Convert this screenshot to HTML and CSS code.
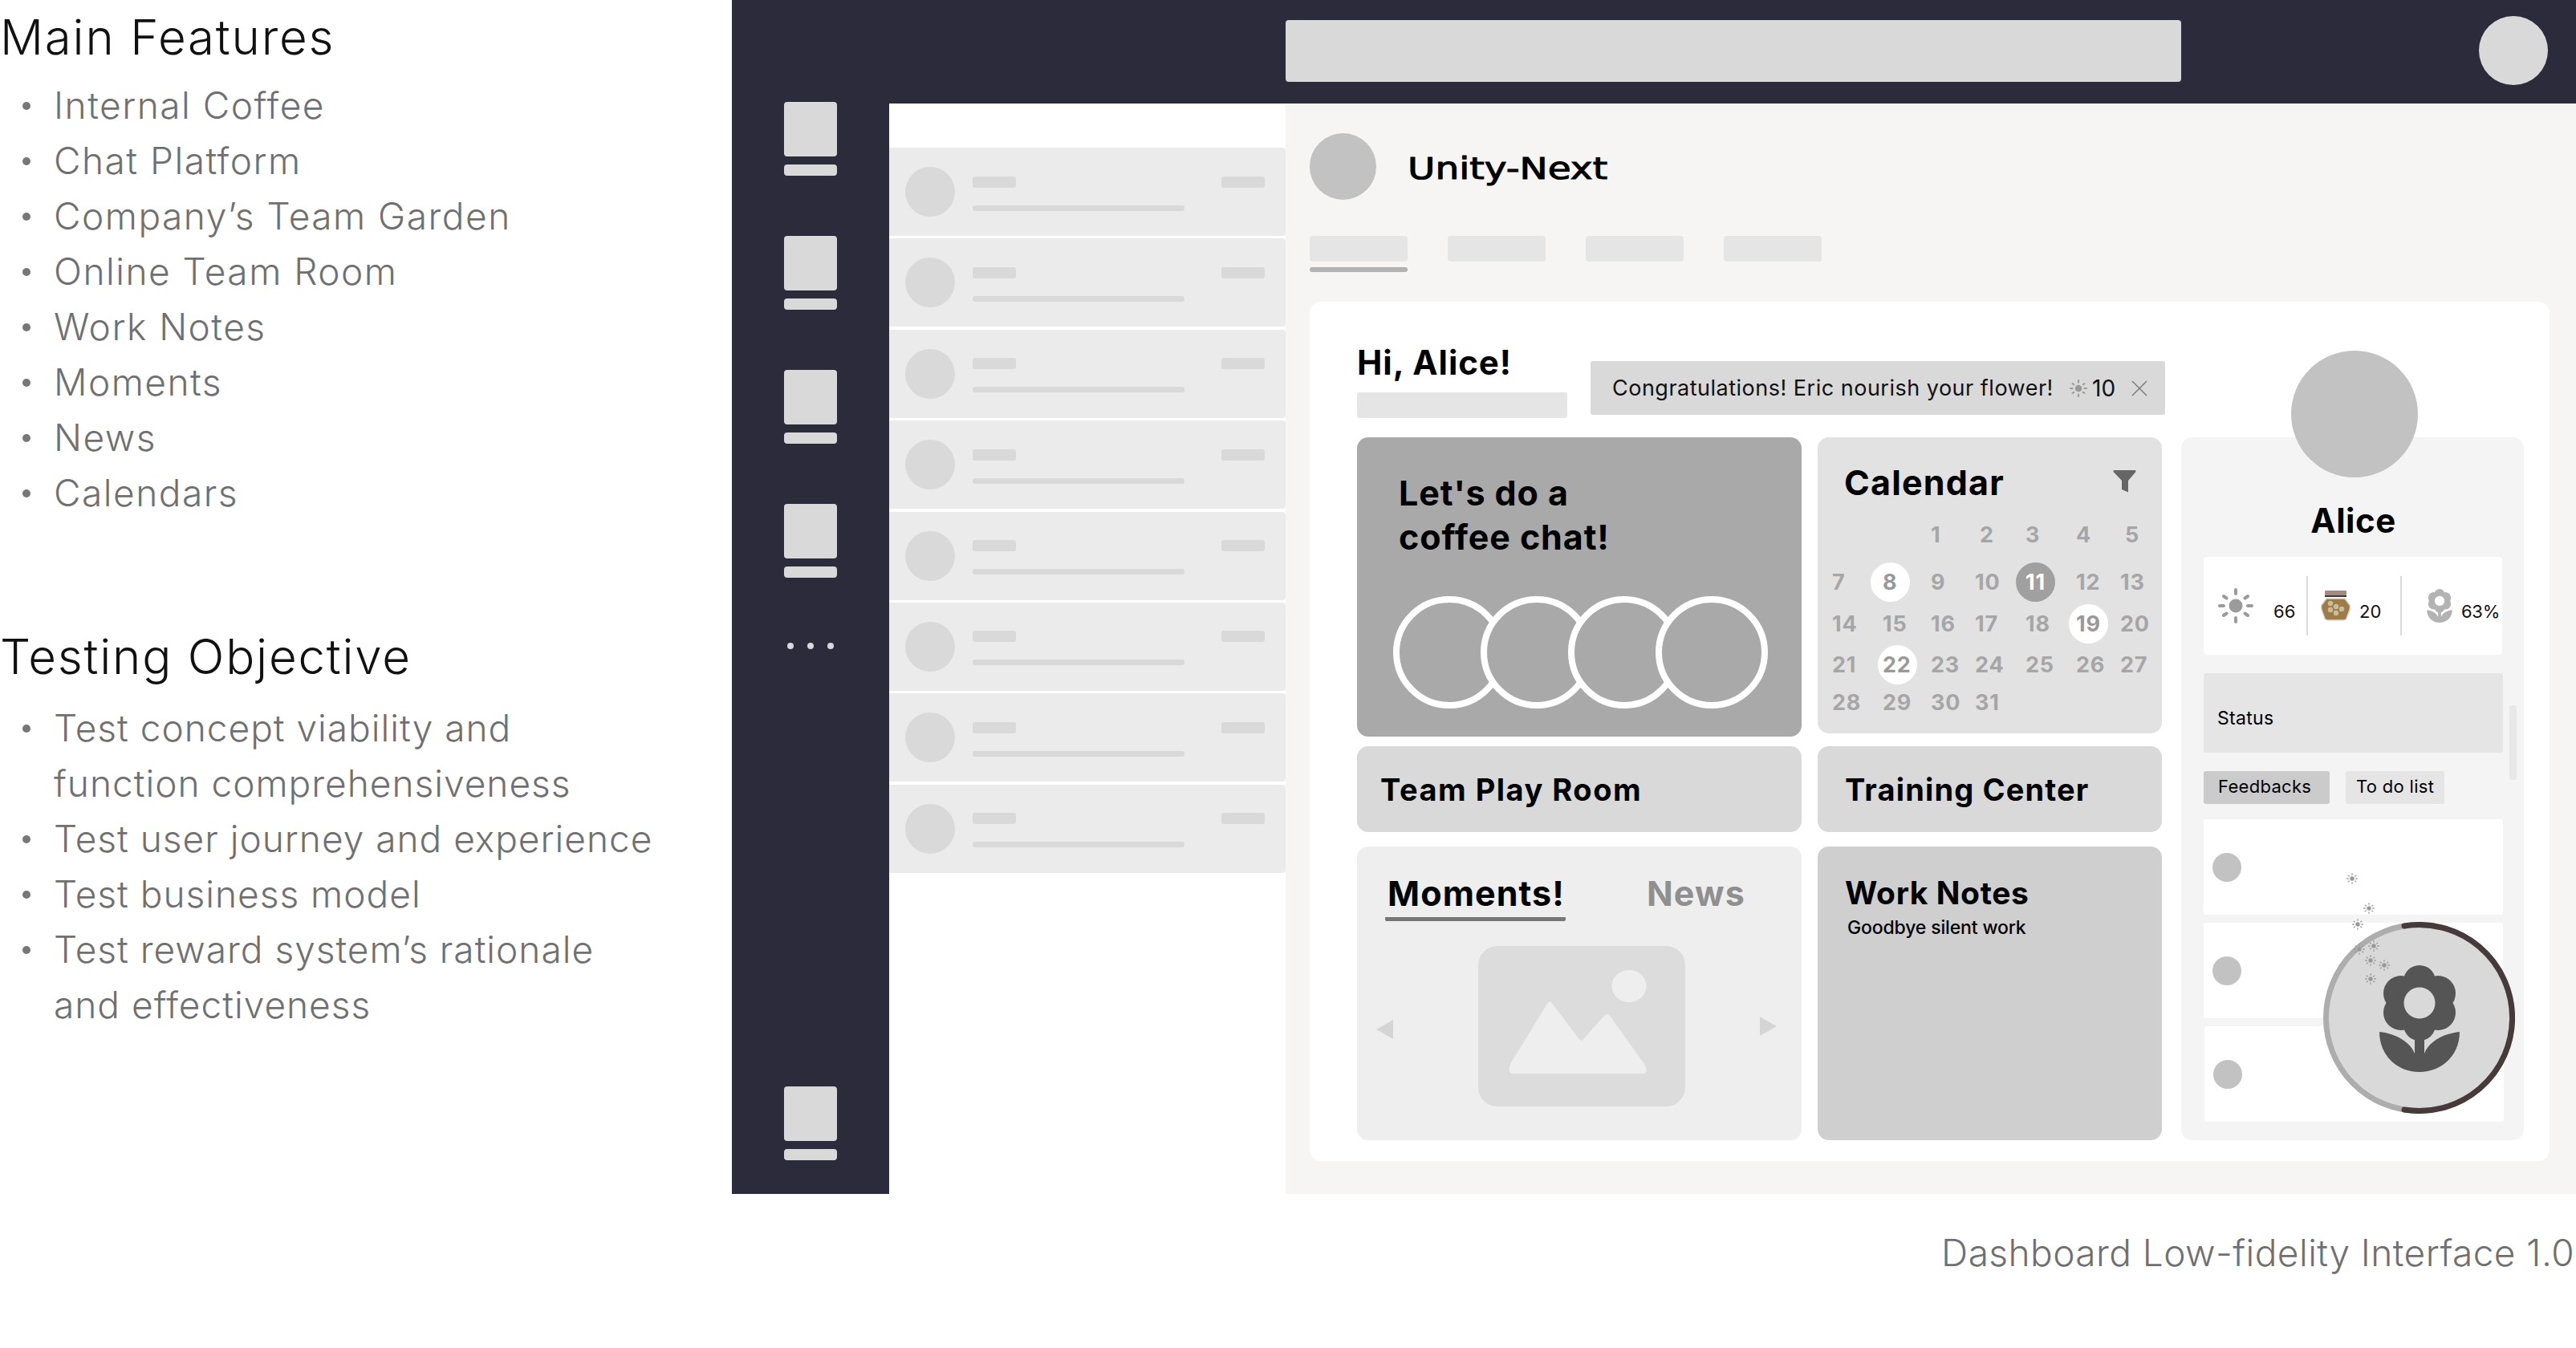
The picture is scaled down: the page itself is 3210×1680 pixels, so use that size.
FILE: index.html
```html
<!DOCTYPE html>
<html lang="en">
<head>
<meta charset="utf-8">
<title>Dashboard Low-fidelity Interface</title>
<link rel="stylesheet" href="styles.css">
</head>
<body>
<svg class="defs" width="0" height="0" aria-hidden="true">
  <symbol id="sun" viewBox="-22 -22 44 44">
    <circle r="8.5" fill="currentColor"/>
    <path d="M0-20V-15M0 20V15M20 0H15M-20 0H-15M15-12L11.5-9.5M-15-12L-11.5-9.5M15 12L11.5 9.5M-15 12L-11.5 9.5" stroke="currentColor" stroke-width="4" stroke-linecap="round" fill="none"/>
  </symbol>
  <symbol id="flower" viewBox="2965 1203 100 133">
    <g fill="currentColor">
      <circle cx="3015" cy="1223" r="20"/><circle cx="3015" cy="1277" r="20"/>
      <circle cx="2992" cy="1238" r="22"/><circle cx="3038" cy="1238" r="22"/>
      <circle cx="2992" cy="1262" r="22"/><circle cx="3038" cy="1262" r="22"/>
      <circle cx="3015" cy="1250" r="26"/>
      <path d="M2965 1286C2985 1288 3003 1298 3009 1313V1285H3021V1313C3027 1298 3045 1288 3065 1286C3065 1314 3044 1336 3015 1336C2986 1336 2965 1314 2965 1286Z"/>
    </g>
    <circle class="flower-hole" cx="3015" cy="1250" r="19.5"/>
  </symbol>
</svg>

<div class="page">
  <aside class="notes">
    <h2 class="notes-title">Main Features</h2>
    <ul class="notes-list">
      <li>Internal Coffee</li>
      <li>Chat Platform</li>
      <li>Company’s Team Garden</li>
      <li>Online Team Room</li>
      <li>Work Notes</li>
      <li>Moments</li>
      <li>News</li>
      <li>Calendars</li>
    </ul>
    <h2 class="notes-title notes-title-second">Testing Objective</h2>
    <ul class="notes-list notes-list-second">
      <li>Test concept viability and<br>function comprehensiveness</li>
      <li>Test user journey and experience</li>
      <li>Test business model</li>
      <li>Test reward system’s rationale<br>and effectiveness</li>
    </ul>
  </aside>

  <div class="right">
    <div class="screen">
      <header class="topbar">
        <div class="search"></div>
        <div class="top-avatar"></div>
      </header>

      <nav class="sidebar">
        <div class="nav-item"><i class="nav-box"></i><i class="nav-bar"></i></div>
        <div class="nav-item"><i class="nav-box"></i><i class="nav-bar"></i></div>
        <div class="nav-item"><i class="nav-box"></i><i class="nav-bar"></i></div>
        <div class="nav-item"><i class="nav-box"></i><i class="nav-bar"></i></div>
        <div class="nav-dots"><i></i><i></i><i></i></div>
        <div class="nav-item nav-bottom"><i class="nav-box"></i><i class="nav-bar"></i></div>
      </nav>

      <section class="chats">
        <div class="chat"><i class="chat-av"></i><div class="chat-body"><div class="chat-top"><i></i><i></i></div><i class="chat-line"></i></div></div>
        <div class="chat"><i class="chat-av"></i><div class="chat-body"><div class="chat-top"><i></i><i></i></div><i class="chat-line"></i></div></div>
        <div class="chat"><i class="chat-av"></i><div class="chat-body"><div class="chat-top"><i></i><i></i></div><i class="chat-line"></i></div></div>
        <div class="chat"><i class="chat-av"></i><div class="chat-body"><div class="chat-top"><i></i><i></i></div><i class="chat-line"></i></div></div>
        <div class="chat"><i class="chat-av"></i><div class="chat-body"><div class="chat-top"><i></i><i></i></div><i class="chat-line"></i></div></div>
        <div class="chat"><i class="chat-av"></i><div class="chat-body"><div class="chat-top"><i></i><i></i></div><i class="chat-line"></i></div></div>
        <div class="chat"><i class="chat-av"></i><div class="chat-body"><div class="chat-top"><i></i><i></i></div><i class="chat-line"></i></div></div>
        <div class="chat"><i class="chat-av"></i><div class="chat-body"><div class="chat-top"><i></i><i></i></div><i class="chat-line"></i></div></div>
      </section>

      <main class="main">
        <div class="brand-row">
          <div class="brand-logo"></div>
          <div class="brand-name">Unity-Next</div>
        </div>
        <div class="tabs">
          <div class="tab tab-active"><i></i></div>
          <div class="tab"><i></i></div>
          <div class="tab"><i></i></div>
          <div class="tab"><i></i></div>
        </div>

        <div class="board">
          <div class="board-left">
            <div class="greet">
              <div class="greet-col">
                <h1 class="greet-title">Hi, Alice!</h1>
                <div class="greet-bar"></div>
              </div>
              <div class="notice">
                <span class="notice-text">Congratulations! Eric nourish your flower!</span>
                <svg class="notice-sun"><use href="#sun"/></svg>
                <span class="notice-num">10</span>
                <svg class="notice-x" viewBox="0 0 20 20"><path d="M1 1L19 19M19 1L1 19"/></svg>
              </div>
            </div>

            <div class="cards">
              <div class="card coffee">
                <h3 class="coffee-title">Let's do a<br>coffee chat!</h3>
                <div class="rings"><i></i><i></i><i></i><i></i></div>
              </div>

              <div class="card calendar">
                <div class="cal-head">
                  <h3 class="cal-title">Calendar</h3>
                  <svg class="cal-filter" viewBox="0 0 29 28"><path d="M2 0H27Q29.500 0 28 2.500L19 13V27.500L11 24V13L1 2.500Q-.5 0 2 0Z"/></svg>
                </div>
                <div class="cal-grid">
                  <span></span><span></span><span>1</span><span class="cal-nudge">2</span><span>3</span><span>4</span><span class="cal-nudge">5</span>
                  <span>7</span><span class="day day-on">8</span><span>9</span><span>10</span><span class="day day-today">11</span><span>12</span><span>13</span>
                  <span>14</span><span>15</span><span>16</span><span>17</span><span>18</span><span class="day day-on">19</span><span>20</span>
                  <span>21</span><span class="day day-on">22</span><span>23</span><span>24</span><span>25</span><span>26</span><span>27</span>
                  <span>28</span><span>29</span><span>30</span><span>31</span>
                </div>
              </div>

              <div class="card strip strip-play"><h3>Team Play Room</h3></div>
              <div class="card strip strip-train"><h3>Training Center</h3></div>

              <div class="card moments">
                <div class="mom-tabs">
                  <h3 class="mom-tab mom-tab-on">Moments!</h3>
                  <h3 class="mom-tab mom-tab-off">News</h3>
                </div>
                <div class="carousel">
                  <i class="arrow arrow-left"></i>
                  <svg class="picture" viewBox="1841 1179 258 200">
                    <rect x="1841" y="1179" width="258" height="200" rx="24" fill="#dcdcdc"/>
                    <ellipse cx="2029" cy="1229" rx="21.500" ry="20" fill="#eeeeee"/>
                    <path d="M1932 1249L1966 1294Q1970 1300 1973 1294L1998 1266Q2002 1262 2005 1266L2048 1326Q2054 1338 2046 1338H1885Q1877 1338 1881 1326L1927 1251Q1930 1246 1932 1249Z" fill="#eeeeee"/>
                  </svg>
                  <i class="arrow arrow-right"></i>
                </div>
              </div>

              <div class="card notes-card">
                <h3 class="notes-card-title">Work Notes</h3>
                <p class="notes-card-sub">Goodbye silent work</p>
              </div>
            </div>
          </div>

          <aside class="profile">
            <div class="profile-avatar"></div>
            <h3 class="profile-name">Alice</h3>
            <div class="stats">
              <div class="stat stat-sun">
                <svg class="stat-sun-icon"><use href="#sun"/></svg>
                <span>66</span>
              </div>
              <div class="stat stat-jar">
                <svg class="stat-jar-icon" viewBox="0 0 37 38">
                  <rect x="5" y="0" width="27" height="6" rx="1" fill="#a58a80"/>
                  <rect x="5" y="6" width="27" height="2" fill="#3a3a3a"/>
                  <path d="M7 10H30L36 18Q37 20 36 24L32 35Q31 37 28 37H9Q6 37 5 35L1 24Q0 20 1 18Z" fill="#a07c44" stroke="#d9d9d9" stroke-width="1.500"/>
                  <g fill="#c5bda0"><circle cx="12" cy="16" r="3.200"/><circle cx="19" cy="20" r="3.200"/><circle cx="26" cy="23" r="3.200"/><circle cx="12" cy="24" r="3.200"/><circle cx="19" cy="28" r="3.200"/></g>
                </svg>
                <span>20</span>
              </div>
              <div class="stat stat-flower">
                <svg class="stat-flower-icon"><use href="#flower"/></svg>
                <span>63%</span>
              </div>
            </div>
            <div class="status-row">
              <div class="status">Status</div>
              <i class="scrollbar"></i>
            </div>
            <div class="pills">
              <span class="pill pill-on">Feedbacks</span>
              <span class="pill pill-todo">To do list</span>
            </div>
            <div class="feedback"><i></i></div>
            <div class="feedback"><i></i></div>
            <div class="feedback feedback-last"><i></i></div>

            <svg class="garden" viewBox="2895 1149 239 239">
              <circle cx="3014.500" cy="1268.500" r="116" fill="#d9d9d9" stroke="#adadad" stroke-width="7"/>
              <path d="M2996 1154A116 116 0 1 1 2996 1383" fill="none" stroke="#463a3a" stroke-width="7" stroke-linecap="round"/>
              <use href="#flower" class="garden-flower" x="2965" y="1203" width="100" height="133"/>
            </svg>
            <svg class="sparks" viewBox="2920 1085 64 150">
              <use href="#sun" x="2924" y="1088" width="14" height="14"/>
              <use href="#sun" x="2945" y="1125" width="14" height="14"/>
              <use href="#sun" x="2931" y="1145" width="14" height="14"/>
              <use href="#sun" x="2933" y="1176" width="14" height="14"/>
              <use href="#sun" x="2951" y="1172" width="14" height="14"/>
              <use href="#sun" x="2947" y="1190" width="14" height="14"/>
              <use href="#sun" x="2964" y="1196" width="14" height="14"/>
              <use href="#sun" x="2947" y="1213" width="14" height="14"/>
            </svg>
          </aside>
        </div>
      </main>
    </div>
    <p class="caption">Dashboard Low-fidelity Interface 1.0</p>
  </div>
</div>
</body>
</html>
```
FILE: styles.css
```css
* { box-sizing: border-box; }
html, body { margin: 0; padding: 0; background: #fff; }
body { font-family: "Inter", "Liberation Sans", sans-serif; color: #000; overflow: hidden; }
h1, h2, h3, p, ul { margin: 0; padding: 0; font-weight: inherit; font-size: inherit; }
i { display: block; }
.defs { position: absolute; }
.flower-hole { fill: var(--hole, #d9d9d9); }

.page { display: flex; width: 3210px; height: 1680px; }

/* Left notes */
.notes { width: 912px; flex: none; font-weight: 300; }
.notes-title { font-size: 60px; line-height: 70px; color: #111; letter-spacing: 1.8px; margin-top: 11px; white-space: nowrap; }
.notes-title-second { margin-top: 134px; }
.notes-list { list-style: none; margin-top: 16px; font-size: 46px; line-height: 69px; color: #707070; letter-spacing: 1.5px; white-space: nowrap; }
.notes-list-second { margin-top: 20px; letter-spacing: 1px; }
.notes-list li { position: relative; padding-left: 67px; }
.notes-list li::before { content: ""; position: absolute; left: 28px; top: 30px; width: 10px; height: 10px; border-radius: 50%; background: #777; }

.right { flex: 1; min-width: 0; }
.screen { width: 2298px; height: 1488px; display: grid; grid-template-rows: 129px 1fr; grid-template-columns: 196px 494px 1fr; }
.caption { margin-top: 50px; text-align: right; padding-right: 2px; font-size: 46px; line-height: 46px; font-weight: 300; letter-spacing: .44px; color: #707070; white-space: nowrap; }

/* Top bar */
.topbar { grid-column: 1 / -1; background: #2c2b3b; display: flex; align-items: flex-start; padding: 25px 35px 0 690px; }
.search { width: 1116px; height: 77px; background: #d9d9d9; border-radius: 4px; }
.top-avatar { width: 86px; height: 86px; margin: -5px 0 0 auto; border-radius: 50%; background: #d9d9d9; }

/* Sidebar */
.sidebar { background: #2c2b3b; display: flex; flex-direction: column; align-items: center; padding-bottom: 42px; }
.nav-item { width: 66px; margin-bottom: 75px; }
.nav-item:first-child { margin-top: -2px; }
.nav-box { height: 68px; background: #d9d9d9; border-radius: 4px; }
.nav-bar { height: 14px; margin-top: 10px; background: #d9d9d9; border-radius: 4px; }
.nav-dots { display: flex; gap: 17px; margin-top: 6px; }
.nav-dots i { width: 8px; height: 8px; border-radius: 50%; background: #d9d9d9; }
.nav-bottom { margin: auto 0 0; }

/* Chat list */
.chats { background: #fff; padding-top: 55px; display: flex; flex-direction: column; gap: 3.400px; }
.chat { height: 110px; background: #ebebeb; border-radius: 0 4px 4px 0; display: flex; align-items: center; padding-left: 20px; }
.chat-av { width: 62px; height: 62px; border-radius: 50%; background: #d9d9d9; }
.chat-body { margin: 4px 0 0 22px; width: 364px; }
.chat-top { display: flex; justify-content: space-between; }
.chat-top i { width: 54px; height: 14px; background: #d9d9d9; border-radius: 3px; }
.chat-line { width: 264px; height: 7px; margin-top: 22px; background: #d9d9d9; border-radius: 3px; }

/* Main */
.main { background: #f6f5f3; padding: 37px 33px 0 30px; }
.brand-row { display: flex; align-items: center; height: 83px; }
.brand-logo { width: 83px; height: 83px; border-radius: 50%; background: #c2c2c2; }
.brand-name { margin: 5px 0 0 39px; font-family: "DejaVu Sans", sans-serif; font-size: 37px; font-weight: 400; -webkit-text-stroke: 1px #000; transform: scaleX(1.27); transform-origin: left center; }
.tabs { display: flex; gap: 50px; margin-top: 45px; height: 45px; }
.tab { width: 122px; }
.tab i { height: 32px; background: #e5e5e5; border-radius: 4px; }
.tab-active::after { content: ""; display: block; height: 6px; margin-top: 7px; background: #b2b2b2; border-radius: 3px; }

.board { display: flex; gap: 24px; margin-top: 37px; height: 1071px; background: #fff; border-radius: 14px; padding-left: 59px; }
.board-left { width: 1003px; flex: none; }

.greet { height: 169px; display: flex; gap: 29px; }
.greet-col { width: 262px; flex: none; padding-top: 52px; }
.greet-title { font-size: 42px; line-height: 48px; font-weight: 700; letter-spacing: .95px; white-space: nowrap; }
.greet-bar { height: 32px; margin-top: 13px; background: #e5e5e5; border-radius: 3px; }
.notice { width: 716px; flex: none; height: 67px; margin-top: 74px; background: #d9d9d9; border-radius: 3px; display: flex; align-items: center; padding-left: 27px; font-size: 27px; color: #111; }
.notice-text { width: 548px; flex: none; white-space: nowrap; letter-spacing: .5px; }
.notice-sun { width: 22px; height: 22px; margin-left: 22px; flex: none; color: #999; }
.notice-num { margin-left: 6px; font-size: 28px; letter-spacing: 0; }
.notice-x { width: 20px; height: 20px; margin-left: 20px; flex: none; }
.notice-x path { stroke: #777; stroke-width: 1.400; fill: none; }

.cards { display: grid; grid-template-columns: 554px 429px; grid-template-rows: 373px 107px 366px; column-gap: 20px; row-gap: 12px; }
.card { border-radius: 14px; }

.coffee { background: #a9a9a9; padding: 42px 0 0 52px; }
.coffee-title { font-size: 43px; line-height: 55px; font-weight: 700; letter-spacing: .9px; }
.rings { display: flex; flex-direction: row-reverse; width: 467px; margin: 46px 0 0 -7px; }
.rings i { width: 140px; height: 140px; border-radius: 50%; border: 8px solid #fff; background: #a9a9a9; flex: none; }
.rings i + i { margin-right: -31px; }

.calendar { background: #e2e2e2; height: 369px; }
.cal-head { display: flex; justify-content: space-between; align-items: flex-start; padding: 28px 32px 0 33px; height: 85px; }
.cal-title { font-size: 43px; line-height: 56px; font-weight: 700; letter-spacing: 1.2px; }
.cal-filter { width: 29px; height: 28px; margin-top: 13px; fill: #666; }
.cal-grid { display: grid; grid-template-columns: 63px 60px 55px 63px 63px 55px 50px; grid-template-rows: 52px 59px 52px 51px 47px; padding-left: 18px; font-size: 27px; font-weight: 700; color: #a6a6a6; letter-spacing: .8px; }
.cal-grid span { align-self: end; justify-self: start; line-height: 30px; }
.cal-grid .cal-nudge { margin-left: 6px; }
.day { position: relative; z-index: 0; }
.day::before { content: ""; position: absolute; z-index: -1; left: 50%; top: 50%; width: 49px; height: 49px; margin: -25px 0 0 -24px; border-radius: 50%; background: #fff; }
.day-on { color: #999; }
.cal-grid .day-today { color: #fff; }
.day-today::before { background: #a0a0a0; }

.strip { background: #d9d9d9; display: flex; align-items: center; font-size: 38px; font-weight: 700; letter-spacing: 1.2px; }
.strip-play { padding-left: 29px; letter-spacing: 1.5px; }
.strip-train { padding-left: 34px; letter-spacing: 1.15px; }

.moments { background: #eeeeee; margin-top: 6px; height: 366px; }
.mom-tabs { display: flex; padding: 30px 0 0 35px; height: 124px; }
.mom-tab { font-size: 43px; line-height: 56px; font-weight: 700; letter-spacing: 1.1px; height: 64px; }
.mom-tab-on { width: 225px; flex: none; padding-left: 3px; border-bottom: 5px solid #777; border-radius: 0 0 2px 2px; height: 63px; white-space: nowrap; }
.mom-tab-off { margin-left: 101px; color: #8f8f8f; }
.carousel { display: flex; align-items: center; padding-left: 24px; height: 200px; }
.picture { width: 258px; height: 200px; margin-left: 106px; flex: none; }
.arrow { width: 21px; height: 24px; background: #d5d5d5; flex: none; }
.arrow-left { clip-path: polygon(100% 0, 100% 100%, 0 50%); margin-top: 8px; }
.arrow-right { clip-path: polygon(0 0, 100% 50%, 0 100%); margin-left: 93px; }

.notes-card { background: #cfcfcf; margin-top: 6px; height: 366px; padding: 30px 0 0 34px; }
.notes-card-title { font-size: 39px; line-height: 56px; font-weight: 700; letter-spacing: .6px; }
.notes-card-sub { font-size: 23px; line-height: 30px; margin: 0 0 0 3px; font-weight: 500; letter-spacing: -.15px; }

/* Profile */
.profile { position: relative; width: 427px; height: 876px; margin-top: 169px; background: #f4f4f4; border-radius: 14px; padding: 0 25px 0 28px; }
.profile-avatar { position: absolute; left: 137px; top: -108px; width: 158px; height: 158px; border-radius: 50%; background: #c2c2c2; }
.profile-name { padding-top: 79px; text-align: center; font-size: 42px; line-height: 50px; font-weight: 700; margin-left: -1px; letter-spacing: .5px; }
.stats { display: flex; align-items: center; width: 372px; height: 122px; margin: 20px 0 0 0; background: #fff; border-radius: 4px; font-size: 22px; font-weight: 400; color: #111; }
.stat { display: flex; align-items: center; height: 74px; border-right: 2px solid #d9d9d9; }
.stat span { margin-top: 14px; }
.stat-sun { width: 130px; padding-left: 18px; gap: 25px; }
.stat-sun-icon { width: 44px; height: 44px; color: #9b9b9b; }
.stat-jar { width: 117px; padding-left: 16px; gap: 11px; }
.stat-jar-icon { width: 37px; height: 38px; }
.stat-flower { padding-left: 31px; gap: 11px; border-right: 0; letter-spacing: -.3px; }
.stat-flower-icon { width: 32px; height: 42px; color: #b3b3b3; --hole: #fff; }
.status-row { position: relative; margin-top: 23px; width: 373px; }
.status { height: 99px; padding: 41px 0 0 17px; font-size: 23px; line-height: 30px; font-weight: 400; background: #e5e5e5; border-radius: 3px; letter-spacing: .3px; }
.scrollbar { position: absolute; left: 381px; top: 40px; width: 9px; height: 93px; background: #e8e8e8; border-radius: 3px; }
.pills { display: flex; gap: 20px; margin-top: 23px; }
.pill { width: 123px; height: 41px; padding-left: 13px; background: #e5e5e5; border-radius: 3px; font-size: 22px; line-height: 39px; font-weight: 400; letter-spacing: .3px; white-space: nowrap; }
.pill-on { width: 157px; background: #cbcbcb; padding-left: 18px; }
.feedback { display: flex; align-items: center; width: 373px; height: 119px; margin-top: 10px; background: #fff; border-radius: 3px; padding-left: 11px; }
.pills + .feedback { margin-top: 19px; }
.feedback i { width: 36px; height: 36px; border-radius: 50%; background: #c2c2c2; }
.feedback-last { margin-left: 1px; }
.garden { position: absolute; left: 177px; top: 604px; width: 239px; height: 239px; }
.garden-flower { color: #555; --hole: #d9d9d9; }
.sparks { position: absolute; left: 202px; top: 540px; width: 64px; height: 150px; color: #999; }
```
